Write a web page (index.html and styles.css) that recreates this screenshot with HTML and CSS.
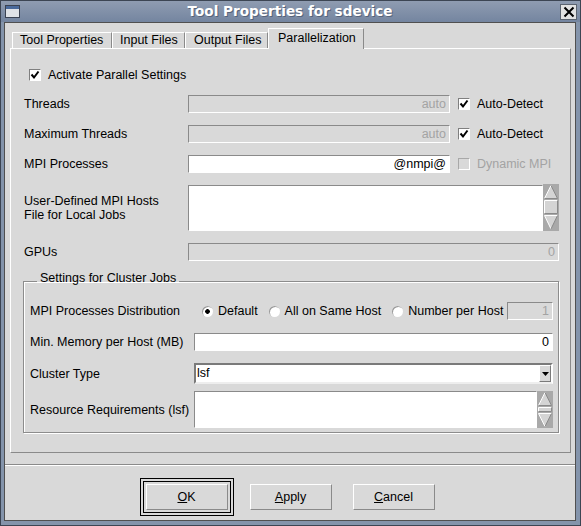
FILE: index.html
```html
<!DOCTYPE html>
<html>
<head>
<meta charset="utf-8">
<title>Tool Properties for sdevice</title>
<link rel="stylesheet" href="styles.css">
</head>
<body>
<div class="window">
  <div class="titlebar">
    <span class="win-icon"><span class="win-icon-bar"></span></span>
    <span class="title">Tool Properties for sdevice</span>
    <span class="close-btn">
      <svg width="14" height="14" viewBox="0 0 14 14"><path d="M2.5 2.5 L11.5 11.5 M11.5 2.5 L2.5 11.5" stroke="#000" stroke-width="2" fill="none"/></svg>
    </span>
  </div>
  <div class="frame">
    <div class="client">
      <div class="tabs">
        <div class="tab t1">Tool Properties</div>
        <div class="tab t2">Input Files</div>
        <div class="tab t3">Output Files</div>
        <div class="tab t4 active">Parallelization</div>
      </div>
      <div class="panel">
        <label class="check master"><span class="cb"><svg width="10" height="10" viewBox="0 0 10 10"><path d="M1.5 4.5 L4 7.5 L8.5 1.5" stroke="#000" stroke-width="2" fill="none"/></svg></span>Activate Parallel Settings</label>

        <div class="prow">
          <span class="lbl">Threads</span>
          <div class="entry disabled">auto</div>
          <label class="check"><span class="cb"><svg width="10" height="10" viewBox="0 0 10 10"><path d="M1.5 4.5 L4 7.5 L8.5 1.5" stroke="#000" stroke-width="2" fill="none"/></svg></span>Auto-Detect</label>
        </div>

        <div class="prow">
          <span class="lbl">Maximum Threads</span>
          <div class="entry disabled">auto</div>
          <label class="check"><span class="cb"><svg width="10" height="10" viewBox="0 0 10 10"><path d="M1.5 4.5 L4 7.5 L8.5 1.5" stroke="#000" stroke-width="2" fill="none"/></svg></span>Auto-Detect</label>
        </div>

        <div class="prow">
          <span class="lbl">MPI Processes</span>
          <div class="entry">@nmpi@</div>
          <label class="check disabled"><span class="cb"></span>Dynamic MPI</label>
        </div>

        <div class="hrow">
          <span class="lbl">User-Defined MPI Hosts<br>File for Local Jobs</span>
          <div class="tabox">
            <div class="textarea"></div>
            <svg class="vscroll" width="16" height="47" viewBox="0 0 16 47">
              <rect x="0" y="0" width="16" height="47" fill="#a9a9a9"/>
              <polygon points="8,1.5 14.5,14.5 1.5,14.5" fill="#d4d4d4"/>
              <path d="M1.5 14.5 L8 1.5" stroke="#fff" stroke-width="1" fill="none"/>
              <path d="M8 1.5 L14.5 14.5 L1.5 14.5" stroke="#8a8a8a" stroke-width="1" fill="none"/>
              <rect x="1.5" y="16.5" width="13" height="13" fill="#d4d4d4"/>
              <path d="M1.5 29.5 L1.5 16.5 L14.5 16.5" stroke="#fff" stroke-width="1" fill="none"/>
              <path d="M14.5 16.5 L14.5 29.5 L1.5 29.5" stroke="#8a8a8a" stroke-width="1" fill="none"/>
              <polygon points="1.5,31.5 14.5,31.5 8,45" fill="#d4d4d4"/>
              <path d="M8 45 L1.5 31.5 L14.5 31.5" stroke="#fff" stroke-width="1" fill="none"/>
              <path d="M14.5 31.5 L8 45" stroke="#8a8a8a" stroke-width="1" fill="none"/>
            </svg>
          </div>
        </div>

        <div class="grow">
          <span class="lbl">GPUs</span>
          <div class="entry disabled">0</div>
        </div>

        <fieldset class="group">
          <legend><span class="legend-text">Settings for Cluster Jobs</span></legend>
          <div class="crow dist">
            <span class="lbl">MPI Processes Distribution</span>
            <div class="radios">
              <label class="radio-item"><span class="radio on"></span>Default</label>
              <label class="radio-item"><span class="radio"></span>All on Same Host</label>
              <label class="radio-item"><span class="radio"></span>Number per Host</label>
              <div class="entry disabled small">1</div>
            </div>
          </div>
          <div class="crow mem">
            <span class="lbl">Min. Memory per Host (MB)</span>
            <div class="entry">0</div>
          </div>
          <div class="crow ctype">
            <span class="lbl">Cluster Type</span>
            <div class="combo">
              <span class="combo-text">lsf</span>
              <span class="combo-btn"><svg width="7" height="4" viewBox="0 0 7 4"><polygon points="0,0 7,0 3.5,4" fill="#000"/></svg></span>
            </div>
          </div>
          <div class="crow res">
            <span class="lbl">Resource Requirements (lsf)</span>
            <div class="tabox">
              <div class="textarea"></div>
              <svg class="vscroll" width="16" height="37" viewBox="0 0 16 37">
                <rect x="0" y="0" width="16" height="37" fill="#a9a9a9"/>
                <polygon points="8,1.5 14.5,14.5 1.5,14.5" fill="#d4d4d4"/>
                <path d="M1.5 14.5 L8 1.5" stroke="#fff" stroke-width="1" fill="none"/>
                <path d="M8 1.5 L14.5 14.5 L1.5 14.5" stroke="#8a8a8a" stroke-width="1" fill="none"/>
                <rect x="1.5" y="16.5" width="13" height="4" fill="#d4d4d4"/>
                <path d="M1.5 20.5 L1.5 16.5 L14.5 16.5" stroke="#fff" stroke-width="1" fill="none"/>
                <path d="M14.5 16.5 L14.5 20.5 L1.5 20.5" stroke="#8a8a8a" stroke-width="1" fill="none"/>
                <polygon points="1.5,22.5 14.5,22.5 8,35.5" fill="#d4d4d4"/>
                <path d="M8 35.5 L1.5 22.5 L14.5 22.5" stroke="#fff" stroke-width="1" fill="none"/>
                <path d="M14.5 22.5 L8 35.5" stroke="#8a8a8a" stroke-width="1" fill="none"/>
              </svg>
            </div>
          </div>
        </fieldset>
      </div>

      <div class="separator"></div>

      <div class="buttons">
        <div class="ring"><div class="btn"><span><u>O</u>K</span></div></div>
        <div class="btn"><span><u>A</u>pply</span></div>
        <div class="btn cancel"><span><u>C</u>ancel</span></div>
      </div>
    </div>
  </div>
</div>
</body>
</html>
```
FILE: styles.css
```css
* { box-sizing: border-box; }
html, body { margin: 0; padding: 0; }
body {
  width: 581px;
  height: 526px;
  overflow: hidden;
  background: #d9d9d9;
  font-family: "Liberation Sans", Arial, sans-serif;
  font-size: 12.5px;
  color: #000;
}
.window {
  width: 581px;
  height: 526px;
  border: 1px solid #3c4553;
  display: flex;
  flex-direction: column;
  background: #8494ab;
}
.titlebar {
  height: 21px;
  flex: none;
  display: flex;
  align-items: center;
  background: linear-gradient(#8f9cb1, #7485a0);
  padding: 0 3px 0 4px;
}
.win-icon {
  width: 15px;
  height: 13px;
  border: 1px solid #3a4252;
  background: #dfe2e7;
  display: flex;
  flex-direction: column;
}
.win-icon-bar { height: 3px; background: #4a6a9c; }
.title {
  flex: 1;
  text-align: center;
  color: #fff;
  font-family: "DejaVu Sans", sans-serif;
  font-weight: bold;
  font-size: 13.6px;
  line-height: 17px;
  text-shadow: 1px 1px 0 #56637a;
}
.close-btn {
  width: 17px;
  height: 16px;
  border: 1px solid #5c6470;
  background: #e2e2e2;
  display: flex;
  align-items: center;
  justify-content: center;
}
.frame {
  flex: 1;
  min-width: 0;
  padding: 0 4px 4px 3px;
  display: flex;
}
.client {
  flex: 1;
  min-width: 0;
  border: 1px solid #505050;
  background: #d9d9d9;
  padding: 5px 4px 0 5px;
  display: flex;
  flex-direction: column;
}
.tabs {
  height: 20px;
  display: flex;
  align-items: flex-end;
  flex: none;
}
.tab {
  height: 16px;
  border: 1px solid;
  border-bottom: none;
  border-color: #fff #8a8a8a transparent #fff;
  padding: 0 0 0 7px;
  line-height: 15px;
  white-space: nowrap;
  overflow: hidden;
}
.tab.t1 { width: 100px; margin-left: 2px; }
.tab.t2 { width: 73px; }
.tab.t3 { width: 83px; padding-left: 8px; }
.tab.t4 { width: 96px; }
.tab.active {
  height: 21px;
  margin-bottom: -1px;
  padding-top: 2px;
  padding-left: 9px;
  position: relative;
  z-index: 1;
  background: #d9d9d9;
}
.panel {
  height: 405px;
  flex: none;
  min-width: 0;
  border: 1px solid;
  border-color: #fff #8a8a8a #8a8a8a #fff;
  padding: 17px 11px 0 13px;
  display: flex;
  flex-direction: column;
  gap: 12px;
}
.check {
  display: flex;
  align-items: center;
  gap: 7px;
  white-space: nowrap;
}
.check.master { height: 17px; margin-left: 5px; }
.check.disabled { color: #a3a3a3; }
.cb {
  width: 12px;
  height: 12px;
  border: 1px solid;
  border-color: #7f7f7f #fff #fff #7f7f7f;
  background: #fff;
  display: flex;
  align-items: center;
  justify-content: center;
}
.check.disabled .cb { background: #d9d9d9; border-color: #a8a8a8 #fff #fff #a8a8a8; }
.prow {
  display: grid;
  grid-template-columns: 164px 262px minmax(0, 1fr);
  align-items: center;
  height: 18px;
}
.prow .check { margin-left: 8px; }
.hrow {
  display: grid;
  grid-template-columns: 164px minmax(0, 1fr);
  align-items: center;
  height: 46px;
}
.hrow .lbl { line-height: 14px; }
.grow {
  display: grid;
  grid-template-columns: 164px minmax(0, 1fr);
  align-items: center;
  height: 18px;
}
.lbl { white-space: nowrap; }
.entry {
  height: 18px;
  border: 1px solid;
  border-color: #8a8a8a #fff #fff #8a8a8a;
  background: #fff;
  text-align: right;
  padding: 0 3px;
  line-height: 16px;
  white-space: nowrap;
}
.entry.disabled { background: #d9d9d9; color: #a3a3a3; }
.tabox { display: flex; height: 100%; }
.textarea {
  flex: 1;
  border: 1px solid;
  border-color: #8a8a8a #fff #fff #8a8a8a;
  background: #fff;
}
.vscroll { flex: none; display: block; }
.hrow .tabox .vscroll { margin-top: -1px; }
.group {
  margin: 1px 0 0 -1px;
  border: 1px solid #8c8c8c;
  box-shadow: inset 1px 1px 0 #fff, 1px 1px 0 #fff;
  padding: 14px 5px 5px 6px;
  min-width: 0;
}
.group legend {
  margin-left: 7px;
  padding: 0 3px;
  line-height: 14px;
}
.legend-text {
  position: relative;
  top: -3px;
}
.crow {
  display: grid;
  grid-template-columns: 164px minmax(0, 1fr);
  align-items: center;
}
.crow.dist { height: 18px; }
.crow.mem { height: 18px; margin-top: 13px; }
.crow.ctype { height: 21px; margin-top: 12px; }
.crow.res { height: 36px; margin-top: 7px; }
.radios {
  display: flex;
  align-items: center;
  height: 18px;
  padding-left: 8px;
}
.radio-item {
  display: flex;
  align-items: center;
  gap: 5px;
  margin-right: 11px;
  white-space: nowrap;
}
.radio {
  width: 11px;
  height: 11px;
  border-radius: 50%;
  background: #fff;
  box-shadow: inset 1px 1px 0 #9a9a9a;
}
.radio.on { background: radial-gradient(circle at 50% 50%, #000 0 2px, #fff 2.6px); }
.entry.small { width: 46px; flex: none; margin-left: auto; }
.radios .radio-item:nth-child(3) { margin-right: 0; }
.combo {
  display: flex;
  height: 21px;
  border: 2px solid;
  border-color: #7a7a7a #fff #eeeeee #7a7a7a;
  background: #fff;
}
.combo-text { flex: 1; line-height: 17px; padding-left: 1px; }
.combo-btn {
  width: 12px;
  border: 1px solid;
  border-color: #fff #7a7a7a #7a7a7a #fff;
  background: #d9d9d9;
  display: flex;
  align-items: center;
  justify-content: center;
}
.separator {
  height: 2px;
  flex: none;
  margin: 11px -4px 0 -5px;
  border-top: 1px solid #8a8a8a;
  border-bottom: 1px solid #fff;
}
.buttons {
  margin-top: 12px;
  display: flex;
  align-items: center;
  justify-content: center;
  height: 38px;
  padding-right: 7px;
}
.ring {
  border: 4px double #000;
  padding: 2px;
  margin-right: 16px;
}
.btn {
  width: 82px;
  height: 26px;
  border: 1px solid;
  border-color: #fff #8a8a8a #8a8a8a #fff;
  background: #d9d9d9;
  display: flex;
  align-items: center;
  justify-content: center;
}
.btn.cancel { margin-left: 21px; }
.btn u { text-decoration: underline; }
```
